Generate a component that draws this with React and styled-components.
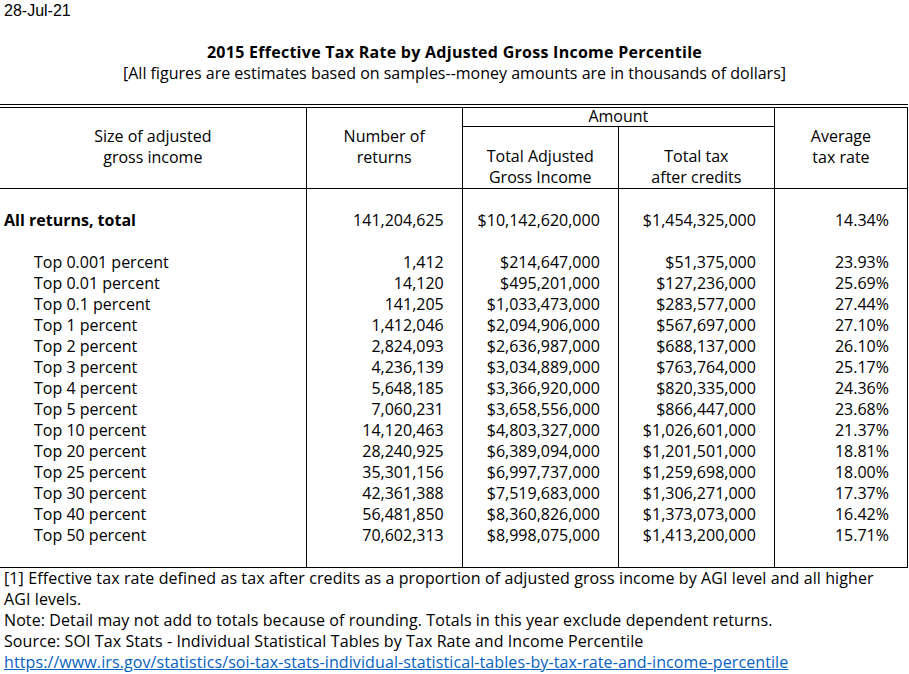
import React from 'react';
import styled, { createGlobalStyle, css } from 'styled-components';

const ROWS = [
  ['Top 0.001 percent', '1,412', '$214,647,000', '$51,375,000', '23.93%'],
  ['Top 0.01 percent', '14,120', '$495,201,000', '$127,236,000', '25.69%'],
  ['Top 0.1 percent', '141,205', '$1,033,473,000', '$283,577,000', '27.44%'],
  ['Top 1 percent', '1,412,046', '$2,094,906,000', '$567,697,000', '27.10%'],
  ['Top 2 percent', '2,824,093', '$2,636,987,000', '$688,137,000', '26.10%'],
  ['Top 3 percent', '4,236,139', '$3,034,889,000', '$763,764,000', '25.17%'],
  ['Top 4 percent', '5,648,185', '$3,366,920,000', '$820,335,000', '24.36%'],
  ['Top 5 percent', '7,060,231', '$3,658,556,000', '$866,447,000', '23.68%'],
  ['Top 10 percent', '14,120,463', '$4,803,327,000', '$1,026,601,000', '21.37%'],
  ['Top 20 percent', '28,240,925', '$6,389,094,000', '$1,201,501,000', '18.81%'],
  ['Top 25 percent', '35,301,156', '$6,997,737,000', '$1,259,698,000', '18.00%'],
  ['Top 30 percent', '42,361,388', '$7,519,683,000', '$1,306,271,000', '17.37%'],
  ['Top 40 percent', '56,481,850', '$8,360,826,000', '$1,373,073,000', '16.42%'],
  ['Top 50 percent', '70,602,313', '$8,998,075,000', '$1,413,200,000', '15.71%'],
];

const GlobalStyle = createGlobalStyle`
  body {
    margin: 0;
    background: #fff;
    color: #000;
    font-family: "Open Sans", Lato, sans-serif;
  }
`;

const App = () => {
  return (
    <Page>
      <GlobalStyle />
      <DateLine>28-Jul-21</DateLine>
      <Spacer />
      <Title>2015 Effective Tax Rate by Adjusted Gross Income Percentile</Title>
      <Subtitle>
        [All figures are estimates based on samples--money amounts are in thousands of dollars]
      </Subtitle>
      <Spacer short />
      <Table>
        <colgroup>
          <col style={{ width: 306 }} />
          <col style={{ width: 156 }} />
          <col style={{ width: 156 }} />
          <col style={{ width: 156 }} />
          <col style={{ width: 133 }} />
        </colgroup>
        <thead>
          <GroupRow>
            <HeadCell rowSpan={2}>Size of adjusted<br />gross income</HeadCell>
            <HeadCell rowSpan={2}>Number of<br />returns</HeadCell>
            <GroupCell colSpan={2}>Amount</GroupCell>
            <HeadCell rowSpan={2}>Average<br />tax rate</HeadCell>
          </GroupRow>
          <SubRow>
            <SubHeadCell>Total Adjusted<br />Gross Income</SubHeadCell>
            <SubHeadCell>Total tax<br />after credits</SubHeadCell>
          </SubRow>
        </thead>
        <tbody>
          <BlankRow />
          <tr>
            <LabelCell bold>All returns, total</LabelCell>
            <NumCell>141,204,625</NumCell>
            <NumCell>$10,142,620,000</NumCell>
            <NumCell>$1,454,325,000</NumCell>
            <NumCell>14.34%</NumCell>
          </tr>
          <BlankRow />
          {ROWS.map(row => (
            <tr key={row[0]}>
              <LabelCell indent>{row[0]}</LabelCell>
              <NumCell>{row[1]}</NumCell>
              <NumCell>{row[2]}</NumCell>
              <NumCell>{row[3]}</NumCell>
              <NumCell>{row[4]}</NumCell>
            </tr>
          ))}
          <BlankRow last />
        </tbody>
      </Table>
      <Notes>
        <p>
          [1] Effective tax rate defined as tax after credits as a proportion of adjusted gross income by AGI level and all higher
          AGI levels.
        </p>
        <p>Note: Detail may not add to totals because of rounding. Totals in this year exclude dependent returns.</p>
        <p>Source: SOI Tax Stats - Individual Statistical Tables by Tax Rate and Income Percentile</p>
        <Link href="#">https://www.irs.gov/statistics/soi-tax-stats-individual-statistical-tables-by-tax-rate-and-income-percentile</Link>
      </Notes>
    </Page>
  );
};

const BlankRow = ({ last }) => (
  <tr>
    <LabelCell last={last}>&nbsp;</LabelCell>
    <NumCell last={last} />
    <NumCell last={last} />
    <NumCell last={last} />
    <NumCell last={last} />
  </tr>
);

const Page = styled.div`
  width: 909px;
  font-size: 16px;
  line-height: 21px;
`;

const DateLine = styled.div`
  padding-left: 4px;
  font-family: "Liberation Sans", Arial, sans-serif;
  font-size: 16px;
  height: 21px;
`;

const Spacer = styled.div`
  height: ${props => (props.short ? 20 : 21)}px;
`;

const Title = styled.div`
  text-align: center;
  font-weight: 700;
  letter-spacing: 0.27px;
  height: 21px;
`;

const Subtitle = styled.div`
  text-align: center;
  height: 21px;
`;

const Table = styled.table`
  width: 908px;
  table-layout: fixed;
  border-collapse: collapse;
  border-top: 4px double #000;

  td,
  th {
    padding: 0;
    line-height: 21px;
    font-weight: 400;
    white-space: nowrap;
  }
`;

const GroupRow = styled.tr`
  height: 20px;
`;

const SubRow = styled.tr`
  height: 62px;
`;

const HeadCell = styled.th`
  vertical-align: top;
  text-align: center;
  padding-top: 18px !important;
  border-right: 1px solid #000;
  border-bottom: 1px solid #000;
`;

const GroupCell = styled.th`
  text-align: center;
  vertical-align: top;
  line-height: 16px !important;
  border-right: 1px solid #000;
  border-bottom: 1px solid #000;
`;

const SubHeadCell = styled.th`
  vertical-align: bottom;
  text-align: center;
  border-right: 1px solid #000;
  border-bottom: 1px solid #000;
`;

const LabelCell = styled.td`
  height: 21px;
  text-align: left;
  padding-left: ${props => (props.indent ? 34 : 4)}px !important;
  font-weight: ${props => (props.bold ? 700 : 400)} !important;
  border-right: 1px solid #000;
  ${props =>
    props.last &&
    css`
      border-bottom: 1px solid #000;
    `}
`;

const NumCell = styled.td`
  height: 21px;
  text-align: right;
  padding-right: 18px !important;
  border-right: 1px solid #000;
  ${props =>
    props.last &&
    css`
      border-bottom: 1px solid #000;
    `}
`;

const Notes = styled.div`
  padding-left: 4px;
  width: 890px;
  letter-spacing: 0.1px;

  p {
    margin: 0;
  }
`;

const Link = styled.a`
  color: #0563c1;
  text-decoration: underline;
`;

export default App;
